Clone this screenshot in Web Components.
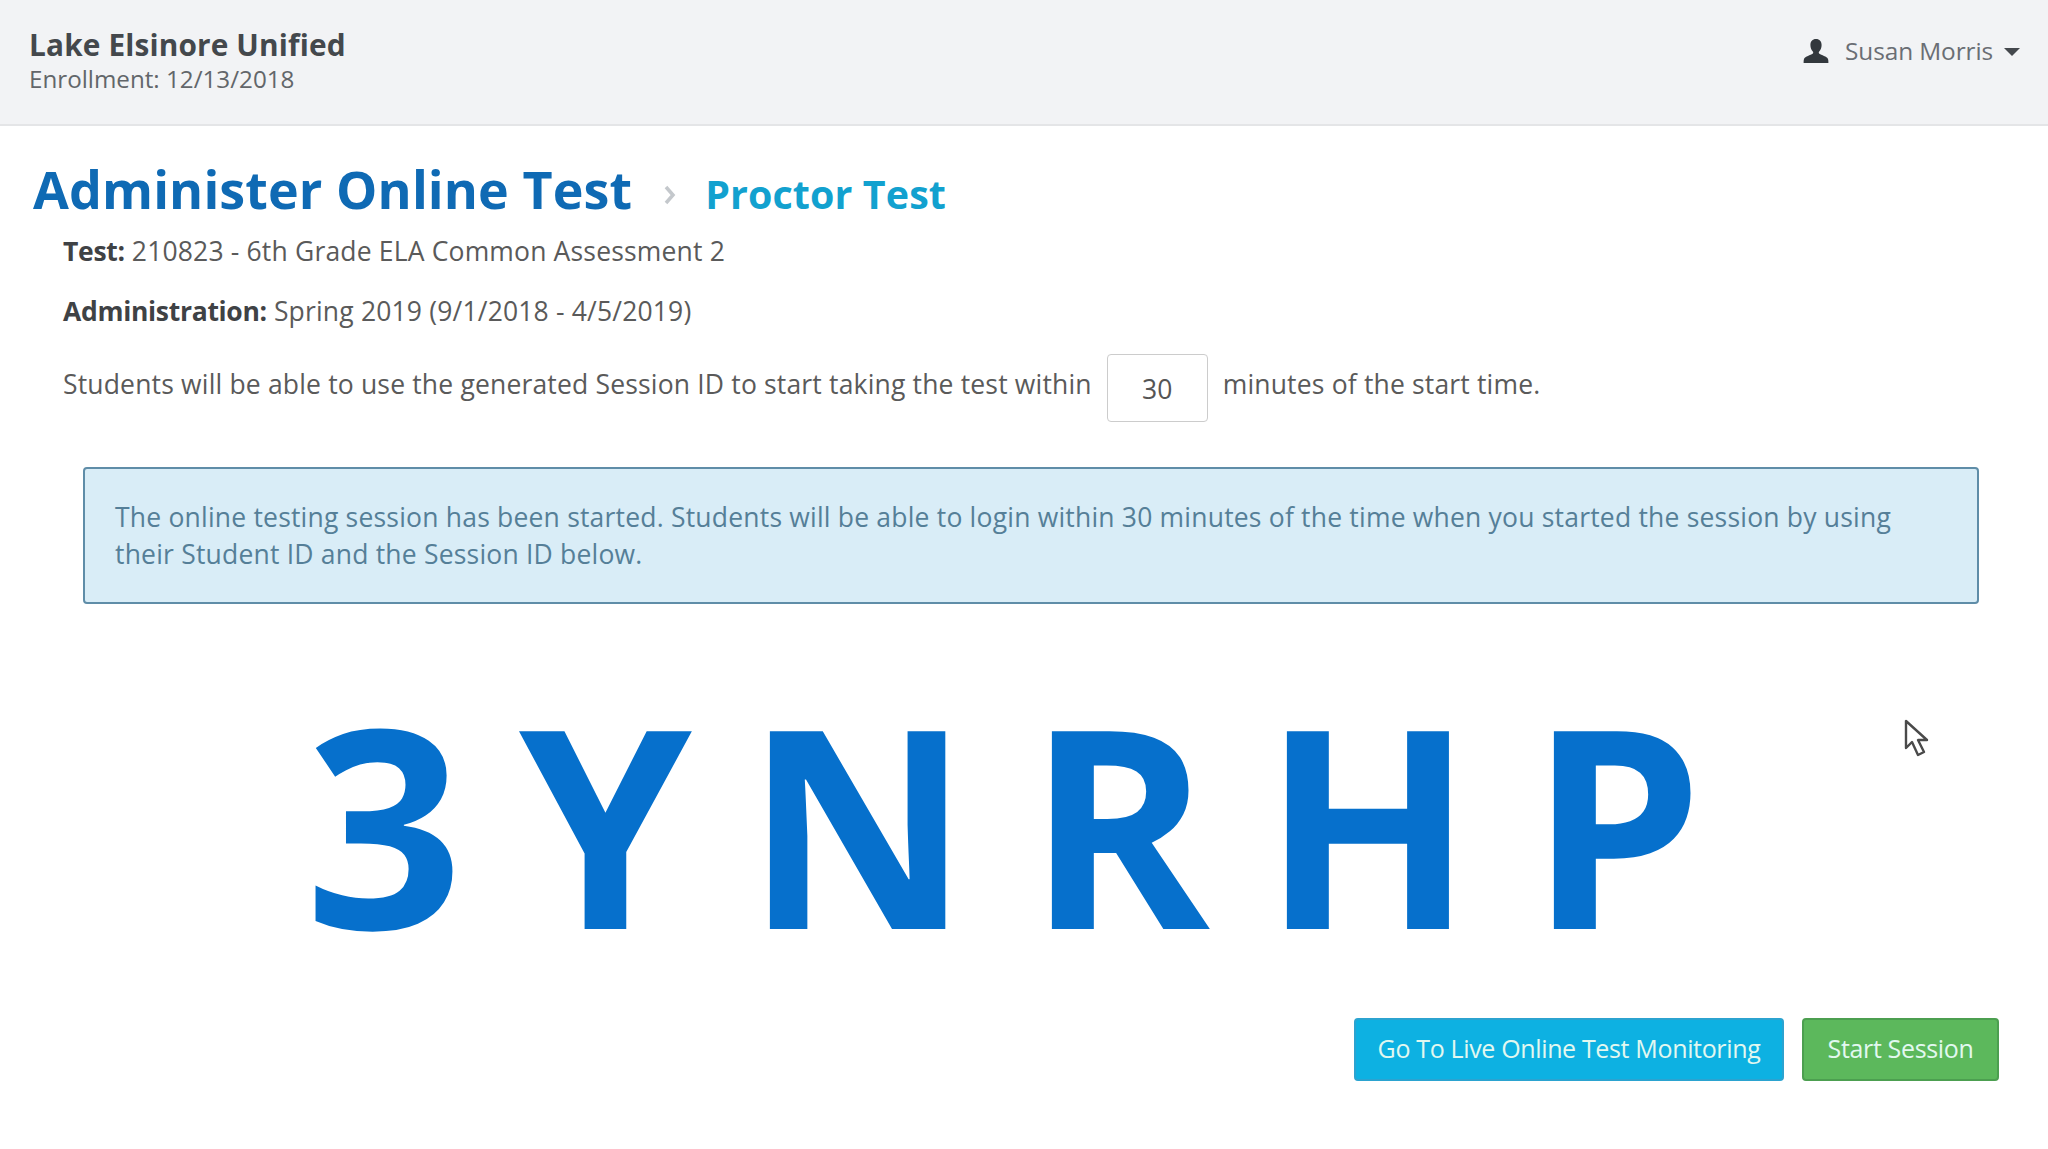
<!DOCTYPE html>
<html lang="en"><head><meta charset="utf-8"><title>Proctor Test</title>
<style>
html,body{margin:0;padding:0;background:#fff;font-family:"Open Sans",sans-serif;color:#555}
body{height:1149px;overflow:hidden;position:relative}
</style></head><body>
<app-header org="Lake Elsinore Unified" sub="Enrollment: 12/13/2018" user="Susan Morris"></app-header>
<page-title main="Administer Online Test" crumb="Proctor Test"></page-title>
<test-info></test-info>
<info-alert>The online testing session has been started. Students will be able to login within 30 minutes of the time when you started the session by using their Student ID and the Session ID below.</info-alert>
<session-code code="3YNRHP"></session-code>
<action-bar></action-bar>
<mouse-cursor></mouse-cursor>
<script>
function def(name, html){
  customElements.define(name, class extends HTMLElement{
    constructor(){super();this.attachShadow({mode:'open'});}
    connectedCallback(){this.shadowRoot.innerHTML=typeof html==='function'?html(this):html;}
  });
}
def('app-header',el=>`<style>
:host{display:flex;justify-content:space-between;box-sizing:border-box;height:126px;background:#f2f3f5;border-bottom:2px solid #e4e5e7;padding:26px 28px 0 29px}
.org{font-size:29.800px;font-weight:700;color:#44484c;line-height:38px;letter-spacing:.15px}
.sub{font-size:24.200px;color:#62666a;line-height:30px}
.user{display:flex;align-items:center;height:49px;font-size:24.400px;color:#6a6e74;letter-spacing:-.1px}
svg{display:block}
.u{margin-right:16px}.c{margin-left:11px;margin-top:3px}
</style><div><div class="org">${el.getAttribute('org')}</div><div class="sub">${el.getAttribute('sub')}</div></div>
<div class="user"><svg class="u" width="26" height="24" viewBox="0 0 26 24"><path fill="#33383d" d="M13 0c3.600 0 5.600 2.400 5.600 6 0 2.600-1 5-2.400 6.400-.6.600-.6 1.800.2 2.400 1.800 1.200 7.600 2.800 8.600 5.200.4 1.200.4 2.400.4 4H.6c0-1.600 0-2.800.4-4 1-2.400 6.800-4 8.600-5.200.8-.6.8-1.800.2-2.400C8.400 11 7.400 8.600 7.400 6 7.400 2.400 9.400 0 13 0z"/></svg><span>${el.getAttribute('user')}</span><svg class="c" width="16" height="8" viewBox="0 0 16 8"><path fill="#44484d" d="M0 0h16L8 8z"/></svg></div>`);
def('page-title',el=>`<style>
:host{display:flex;align-items:baseline;padding:29px 0 0 33px;height:106px;box-sizing:border-box}
.m{font-size:52px;font-weight:700;color:#0f6ab4;line-height:68px;letter-spacing:.1px}
.c{font-size:39.400px;font-weight:700;color:#12a1cf;line-height:68px;letter-spacing:.1px}
svg{margin:3px 29px 0 32px;align-self:center}
</style><span class="m">${el.getAttribute('main')}</span><svg width="12" height="20" viewBox="0 0 12 20"><path fill="none" stroke="#c4c8cc" stroke-width="3.500" d="M2 2l7 8-7 8"/></svg><span class="c">${el.getAttribute('crumb')}</span>`);
def('test-info',`<style>
:host{display:block;padding:0 0 0 63px;font-size:26.500px;color:#5a5a5a;letter-spacing:.17px}
.r{line-height:34px}.r b{color:#3f4245;font-weight:700;letter-spacing:-.3px}
.t{margin-top:2px}.a{margin-top:26px}
.s{display:flex;align-items:center;margin-top:26px;height:68px}
.box{box-sizing:border-box;width:101px;height:68px;margin:0 15px 0 15px;border:1.500px solid #ccc;border-radius:4px;display:flex;align-items:center;justify-content:center;color:#555;padding-top:1px}
.s span{position:relative;top:-4px}
</style>
<div class="r t"><b>Test:</b> 210823 - 6th Grade ELA Common Assessment 2</div>
<div class="r a"><b>Administration:</b> Spring 2019 (9/1/2018 - 4/5/2019)</div>
<div class="s"><span>Students will be able to use the generated Session ID to start taking the test within</span><div class="box">30</div><span>minutes of the start time.</span></div>`);
def('info-alert',`<style>
:host{display:block;box-sizing:border-box;margin:45px 69px 0 83px;height:137px;background:#d9edf7;border:2px solid #5f8da8;border-radius:4px;padding:30px 30px 0;font-size:26.500px;line-height:37px;color:#557f98;letter-spacing:.2px}
</style><slot></slot>`);
def('session-code',el=>`<style>
:host{display:flex;justify-content:flex-start;margin:0;padding:108px 0 0 305px;height:396px;box-sizing:border-box;font-size:277px;font-weight:700;color:#0670cc;line-height:220px;overflow:visible}
span{display:block;flex:none}
</style>`+[...el.getAttribute('code')].map((c,i)=>`<span style="width:${[214,226,282,235,267,200][i]}px">${c}</span>`).join(''));
def('action-bar',`<style>
:host{display:flex;justify-content:flex-end;gap:18px;padding:18px 49px 0 0}
div{box-sizing:border-box;height:63px;padding-bottom:3px;display:flex;align-items:center;justify-content:center;border-radius:4px;color:#e2f8f0;font-size:25px;letter-spacing:-.35px}
.a{width:430px;background:#0db1e2;border:2px solid #2ba3d0}
.b{width:197px;background:#5cb85c;border:2px solid #4c9f50}
</style><div class="a">Go To Live Online Test Monitoring</div><div class="b">Start Session</div>`);
def('mouse-cursor',`<style>
:host{position:absolute;left:1903px;top:718px;width:28px;height:42px;display:block}
svg{display:block}
</style><svg width="28" height="42" viewBox="0 0 28 42"><path fill="#fff" stroke="#4a4a4a" stroke-width="2.400" stroke-linejoin="round" d="M3 3v27l6-6 6 13 6-3-6-12h9z"/></svg>`);
</script>
</body></html>
